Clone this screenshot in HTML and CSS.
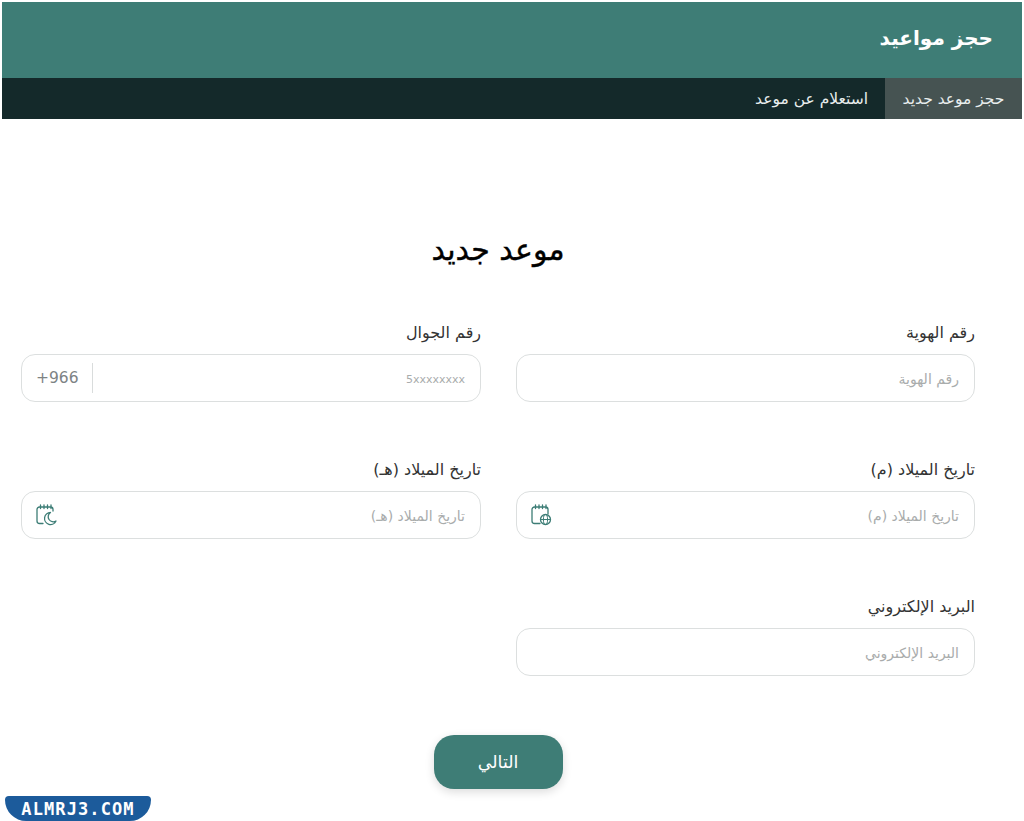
FILE: index.html
```html
<!DOCTYPE html>
<html lang="ar" dir="rtl">
<head>
    <meta charset="UTF-8">
    <meta name="viewport" content="width=device-width, initial-scale=1.0">
    <title>حجز مواعيد</title>
    <link rel="stylesheet" href="styles.css">
</head>
<body>
    <!-- Top header -->
    <header class="site-header">
        <div class="site-title">حجز مواعيد</div>
        <nav class="tabs">
            <a class="tab tab-active">حجز موعد جديد</a>
            <a class="tab">استعلام عن موعد</a>
        </nav>
    </header>

    <main class="content">
        <h1 class="page-title">موعد جديد</h1>

        <form class="form-grid">
            <div class="field">
                <label class="field-label">رقم الهوية</label>
                <div class="input-box"><span class="placeholder">رقم الهوية</span></div>
            </div>
            <div class="field">
                <label class="field-label">رقم الجوال</label>
                <div class="input-box">
                    <span class="placeholder placeholder-latin">5xxxxxxxx</span>
                    <span class="phone-code" dir="ltr">+966</span>
                </div>
            </div>
            <div class="field">
                <label class="field-label">تاريخ الميلاد (م)</label>
                <div class="input-box">
                    <span class="placeholder">تاريخ الميلاد (م)</span>
                    <!-- calendar with globe -->
                    <svg class="cal-icon" viewBox="0 0 22 22" fill="none" stroke="#3d7d76" stroke-width="1.3" stroke-linecap="round">
                        <path d="M10 19.5H4.5a2.5 2.5 0 0 1-2.5-2.500V5.500a2.500 2.500 0 0 1 2.500-2.500h11a2.500 2.500 0 0 1 2.500 2.500V10"/>
                        <path d="M5.500 1v3.500M9 1v3.500M12.500 1v3.500M16 1v3.500"/>
                        <circle cx="15.500" cy="15.500" r="5"/>
                        <ellipse cx="15.500" cy="15.500" rx="2.100" ry="5" stroke-width="1"/>
                        <path d="M10.500 15.500h10" stroke-width="1"/>
                    </svg>
                </div>
            </div>
            <div class="field">
                <label class="field-label">تاريخ الميلاد (هـ)</label>
                <div class="input-box">
                    <span class="placeholder">تاريخ الميلاد (هـ)</span>
                    <!-- calendar with crescent -->
                    <svg class="cal-icon" viewBox="0 0 22 22" fill="none" stroke="#3d7d76" stroke-width="1.3" stroke-linecap="round" stroke-linejoin="round">
                        <path d="M8 19.500H4.500a2.500 2.500 0 0 1-2.500-2.500V5.500a2.500 2.500 0 0 1 2.500-2.500h11a2.500 2.500 0 0 1 2.500 2.500V7"/>
                        <path d="M5.500 1v3.500M9 1v3.500M12.500 1v3.500M16 1v3.500"/>
                        <path d="M15.500 8.500a6 6 0 1 0 5.500 8.500a5 5 0 0 1-5.500-8.500z"/>
                    </svg>
                </div>
            </div>
            <div class="field">
                <label class="field-label">البريد الإلكتروني</label>
                <div class="input-box"><span class="placeholder">البريد الإلكتروني</span></div>
            </div>
        </form>

        <div class="actions">
            <button class="next-btn" type="button">التالي</button>
        </div>
    </main>

    <!-- Watermark over the bottom corner -->
    <div class="watermark" dir="ltr">ALMRJ3.COM</div>
</body>
</html>
```

FILE: styles.css
```css
/* Page base */
body {
    margin: 0;
    padding-top: 2px;
    height: 819px;
    overflow: hidden;
    background-color: #fff;
    color: #222;
    font-family: "DejaVu Sans", "Noto Sans", sans-serif;
    position: relative;
}

/* Header */
.site-header {
    margin: 0 2px;
}

.site-title {
    height: 76px;
    box-sizing: border-box;
    padding: 21px 29px 0 0;
    background-color: #3e7d76;
    color: #fff;
    font-size: 20px;
    font-weight: bold;
    line-height: 30px;
}

.tabs {
    display: flex;
    height: 41px;
    background-color: #14292a;
}

.tab {
    display: flex;
    align-items: center;
    padding: 0 17px;
    color: #e9eeee;
    font-size: 15.5px;
}

.tab-active {
    width: 137px;
    box-sizing: border-box;
    justify-content: center;
    padding: 0;
    background-color: #465352;
}

/* Form area */
.content {
    padding: 0 49px 0 21px;
}

.page-title {
    margin: 112px 0 0;
    height: 64px;
    text-align: center;
    font-size: 30px;
    line-height: 38px;
    font-weight: normal;
    color: #000;
    -webkit-text-stroke: 0.4px #000;
}

.form-grid {
    display: grid;
    grid-template-columns: 459px 460px;
    column-gap: 35px;
    row-gap: 55px;
    margin-top: 25px;
}

.field-label {
    display: block;
    height: 34px;
    line-height: 26px;
    font-size: 16px;
    color: #333;
}

.input-box {
    display: flex;
    align-items: center;
    justify-content: space-between;
    height: 48px;
    box-sizing: border-box;
    padding: 0 15px 0 14px;
    border: 1px solid #dcdfdf;
    border-radius: 14px;
    background-color: #fff;
}

.placeholder {
    padding-top: 2px;
    color: #a9acac;
    font-size: 14px;
}

.placeholder-latin {
    font-size: 11px;
}

.phone-code {
    height: 30px;
    line-height: 30px;
    width: 57px;
    box-sizing: border-box;
    border-right: 1px solid #d9dcdc;
    color: #7d8384;
    font-size: 15.5px;
}

.cal-icon {
    width: 22px;
    height: 22px;
    margin-left: -1px;
}

/* Next button */
.actions {
    display: flex;
    justify-content: center;
    margin-top: 59px;
}

.next-btn {
    width: 129px;
    height: 54px;
    border: none;
    border-radius: 20px;
    background-color: #3e7d76;
    color: #fff;
    font-family: inherit;
    font-size: 17.5px;
    box-shadow: 0 3px 10px rgba(0, 0, 0, 0.14);
}

/* Watermark */
.watermark {
    position: absolute;
    left: 5px;
    top: 796px;
    width: 146px;
    height: 25px;
    border-radius: 4px 4px 22px 22px;
    background-color: #1c5b9b;
    color: #fff;
    font-family: "DejaVu Sans Mono", monospace;
    font-size: 17px;
    font-weight: bold;
    line-height: 26px;
    letter-spacing: 1.1px;
    text-align: center;
}
```
